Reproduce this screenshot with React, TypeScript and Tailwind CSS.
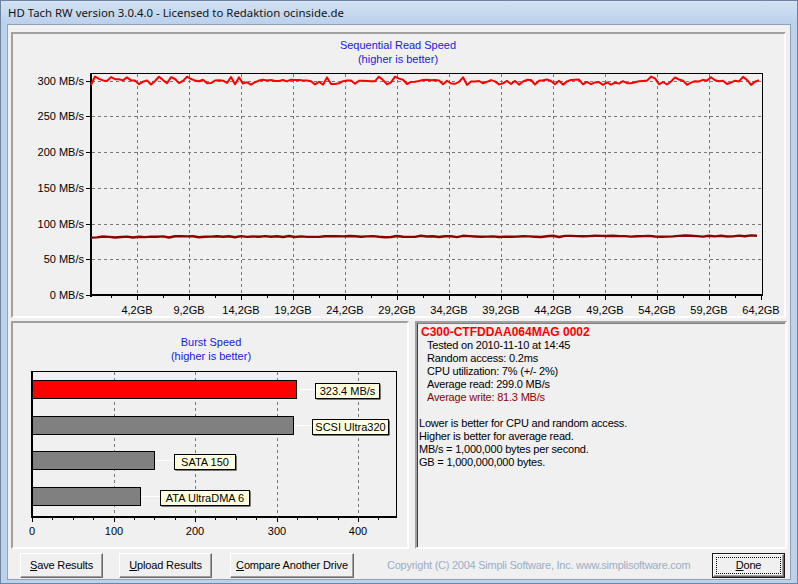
import React from "react";

const FONT = { fontFamily: '"Liberation Sans", Arial, sans-serif' };

function rng(seed: number) {
  let s = seed;
  return () => {
    s = (s * 1103515245 + 12345) % 2147483648;
    return s / 2147483648;
  };
}

// read + write curves of the sequential chart, in page pixels
function buildCurves() {
  const r = rng(11);
  const read: string[] = [];
  let y = 84;
  for (let x = 91; x <= 762; x += 4) {
    const p = r();
    if (x === 91) y = 85;
    else if (x < 97) y = 76.5;
    else if (p < 0.08) y = 76.5 + r();
    else if (p < 0.34) y = 83 + r() * 2;
    else y = y * 0.3 + (79 + r() * 3) * 0.7;
    read.push(`${x},${y.toFixed(1)}`);
  }
  const r2 = rng(31);
  const write: string[] = [];
  for (let x = 91; x <= 762; x += 6) {
    const w = 237 + (r2() - 0.5) * 1.4 - (x - 91) * 0.0015;
    write.push(`${x},${w.toFixed(1)}`);
  }
  return { read: read.join(" "), write: write.join(" ") };
}

const curves = buildCurves();

const yOf = (v: number) => 295 - v * 0.715;
const gbX = [137, 189, 241, 293, 345, 397, 449, 501, 553, 605, 657, 709, 761];
const gbLabels = ["4,2GB", "9,2GB", "14,2GB", "19,2GB", "24,2GB", "29,2GB", "34,2GB", "39,2GB", "44,2GB", "49,2GB", "54,2GB", "59,2GB", "64,2GB"];

function SequentialChart() {
  return (
    <svg width={771} height={282} viewBox="13 34 771 282" style={FONT} className="block">
      <text x={398} y={49} textAnchor="middle" fontSize={11} fill="#1a1ad6">Sequential Read Speed</text>
      <text x={398} y={63} textAnchor="middle" fontSize={11} fill="#1a1ad6">(higher is better)</text>
      {[50, 100, 150, 200, 250, 300].map((v) => (
        <line key={v} x1={92} x2={762} y1={Math.round(yOf(v)) + 0.5} y2={Math.round(yOf(v)) + 0.5} stroke="#7a7a7a" strokeDasharray="3 3" />
      ))}
      {gbX.slice(0, 12).map((x) => (
        <line key={x} x1={x + 0.5} x2={x + 0.5} y1={74} y2={294} stroke="#7a7a7a" strokeDasharray="3 3" />
      ))}
      <rect x={91.5} y={73.5} width={671} height={221} fill="none" stroke="#000" />
      <line x1={91} x2={91} y1={73} y2={297} stroke="#000" strokeWidth={2} />
      <line x1={90} x2={763} y1={295} y2={295} stroke="#000" strokeWidth={2} />
      {[0, 50, 100, 150, 200, 250, 300].map((v) => {
        const y = Math.round(yOf(v));
        return (
          <g key={v}>
            <line x1={86} x2={91} y1={y + 0.5} y2={y + 0.5} stroke="#000" />
            <text x={84} y={y + 4} textAnchor="end" fontSize={11} fill="#000">{v} MB/s</text>
          </g>
        );
      })}
      {gbX.map((x, i) => (
        <g key={x}>
          <line x1={x + 0.5} x2={x + 0.5} y1={295} y2={300} stroke="#000" />
          <line x1={x - 25.5} x2={x - 25.5} y1={295} y2={298} stroke="#000" />
          <text x={x} y={314} textAnchor="middle" fontSize={11} fill="#000">{gbLabels[i]}</text>
        </g>
      ))}
      <polyline points={curves.write} fill="none" stroke="#8c0000" strokeWidth={2.4} strokeLinejoin="round" />
      <polyline points={curves.read} fill="none" stroke="#ff0000" strokeWidth={2} strokeLinejoin="round" />
    </svg>
  );
}

const bx = (v: number) => 32 + v * 0.815;

const bars = [
  { v: 323.4, y: 380, fill: "#ff0000", label: "323.4 MB/s", bx: 315, bw: 64 },
  { v: 320, y: 416, fill: "#808080", label: "SCSI Ultra320", bx: 312, bw: 76 },
  { v: 150, y: 451, fill: "#808080", label: "SATA 150", bx: 174, bw: 61 },
  { v: 133, y: 487, fill: "#808080", label: "ATA UltraDMA 6", bx: 160, bw: 89 },
];

function BurstChart() {
  return (
    <svg width={394} height={224} viewBox="13 323 394 224" style={FONT} className="block">
      <text x={211} y={346} textAnchor="middle" fontSize={11} fill="#1a1ad6">Burst Speed</text>
      <text x={211} y={360} textAnchor="middle" fontSize={11} fill="#1a1ad6">(higher is better)</text>
      {[100, 200, 300, 400].map((v) => (
        <line key={v} x1={Math.round(bx(v)) + 0.5} x2={Math.round(bx(v)) + 0.5} y1={372} y2={516} stroke="#7a7a7a" strokeDasharray="3 3" />
      ))}
      <rect x={32.5} y={371.5} width={364} height={145} fill="none" stroke="#000" />
      <line x1={32} x2={32} y1={371} y2={518} stroke="#000" strokeWidth={2} />
      <line x1={31} x2={397} y1={517} y2={517} stroke="#000" strokeWidth={2} />
      {Array.from({ length: 18 }, (_, i) => i * 25).map((v) => (
        <line key={v} x1={Math.round(bx(v)) + 0.5} x2={Math.round(bx(v)) + 0.5} y1={517} y2={v % 100 === 0 ? 522 : 520} stroke="#000" />
      ))}
      {[0, 100, 200, 300, 400].map((v) => (
        <text key={v} x={Math.round(bx(v))} y={535} textAnchor="middle" fontSize={11} fill="#000">{v}</text>
      ))}
      {bars.map((b) => {
        const end = Math.round(bx(b.v));
        const mid = b.y + 9;
        return (
          <g key={b.label}>
            <rect x={32.5} y={b.y + 0.5} width={end - 32} height={18} fill={b.fill} stroke="#000" />
            <line x1={end + 1} x2={b.bx} y1={mid + 0.5} y2={mid + 0.5} stroke="#ffffff" />
            <rect x={b.bx + 1.5} y={b.y + 4.5} width={b.bw} height={15} fill="#000" />
            <rect x={b.bx + 0.5} y={b.y + 3.5} width={b.bw} height={15} fill="#ffffe1" stroke="#000" />
            <text x={b.bx + b.bw / 2 + 0.5} y={b.y + 15} textAnchor="middle" fontSize={11} fill="#000">{b.label}</text>
          </g>
        );
      })}
    </svg>
  );
}

function WinButton({ first, rest, className = "", isDefault = false }: { first: string; rest: string; className?: string; isDefault?: boolean }) {
  if (isDefault) {
    return (
      <div className={`h-[25px] border border-[#1a1a1a] bg-[#f0f0f0] ${className}`}>
        <div className="flex h-full items-center justify-center border-l border-t border-l-white border-t-white border-r border-b border-r-[#696969] border-b-[#696969] shadow-[inset_-1px_-1px_0_#a0a0a0]">
          <div className="flex h-[17px] w-[65px] items-center justify-center border border-dotted border-black text-[11px] tracking-[-0.15px] text-black">
            <u>{first}</u>
            {rest}
          </div>
        </div>
      </div>
    );
  }
  return (
    <div
      className={`flex h-[25px] items-center justify-center border border-l-white border-t-white border-r-[#696969] border-b-[#696969] bg-[#f0f0f0] text-[11px] tracking-[-0.15px] text-black shadow-[inset_-1px_-1px_0_#a0a0a0] ${className}`}
    >
      <u>{first}</u>
      {rest}
    </div>
  );
}

export default function App() {
  return (
    <div className="flex h-[584px] w-[798px] flex-col overflow-hidden border border-[#6f86a3] bg-[#bcd2ea]" style={FONT}>
      <div className="flex h-[23px] items-center bg-gradient-to-b from-[#d3e2f3] to-[#bad1ea] pl-[7px]">
        <span className="text-[11.4px] text-[#141414]" style={{ fontFamily: '"Noto Sans", "Open Sans", sans-serif' }}>
          HD Tach RW version 3.0.4.0 - Licensed to Redaktion ocinside.de
        </span>
      </div>
      <div className="mx-[6px] h-[556px] border border-[#8ea2ba] bg-[#f0f0f0] pl-[3px] pt-[7px]">
        <div className="h-[286px] w-[775px] border-2 border-l-[#a0a0a0] border-t-[#a0a0a0] border-r-white border-b-white">
          <SequentialChart />
        </div>
        <div className="mt-[3px] flex">
          <div className="h-[228px] w-[398px] border-2 border-l-[#a0a0a0] border-t-[#a0a0a0] border-r-white border-b-white">
            <BurstChart />
          </div>
          <div className="ml-[6px] h-[228px] w-[372px] border-2 border-l-[#a0a0a0] border-t-[#a0a0a0] border-r-white border-b-white">
            <div className="h-full border-l border-t border-l-[#404040] border-t-[#808080] pl-[1px] pt-[2px] text-[11px] leading-[13px] tracking-[-0.2px] text-black">
              <div className="pl-[2px] text-[12px] font-bold tracking-normal text-[#ff0000]">C300-CTFDDAA064MAG 0002</div>
              <div className="pl-[8px]">
                <div>Tested on 2010-11-10 at 14:45</div>
                <div>Random access: 0.2ms</div>
                <div>CPU utilization: 7% (+/- 2%)</div>
                <div>Average read: 299.0 MB/s</div>
                <div className="text-[#8c0000]">Average write: 81.3 MB/s</div>
              </div>
              <div className="mt-[13px]">
                <div>Lower is better for CPU and random access.</div>
                <div>Higher is better for average read.</div>
                <div>MB/s = 1,000,000 bytes per second.</div>
                <div>GB = 1,000,000,000 bytes.</div>
              </div>
            </div>
          </div>
        </div>
        <div className="mt-[4px] flex h-[25px] items-center">
          <WinButton first="S" rest="ave Results" className="ml-[9px] w-[83px]" />
          <WinButton first="U" rest="pload Results" className="ml-[16px] w-[93px]" />
          <WinButton first="C" rest="ompare Another Drive" className="ml-[18px] w-[124px]" />
          <span className="ml-[33px] text-[11px] tracking-[-0.25px] text-[#9aaec6]">Copyright (C) 2004 Simpli Software, Inc. www.simplisoftware.com</span>
          <WinButton first="D" rest="one" isDefault className="ml-auto mr-[5px] w-[73px]" />
        </div>
      </div>
    </div>
  );
}
